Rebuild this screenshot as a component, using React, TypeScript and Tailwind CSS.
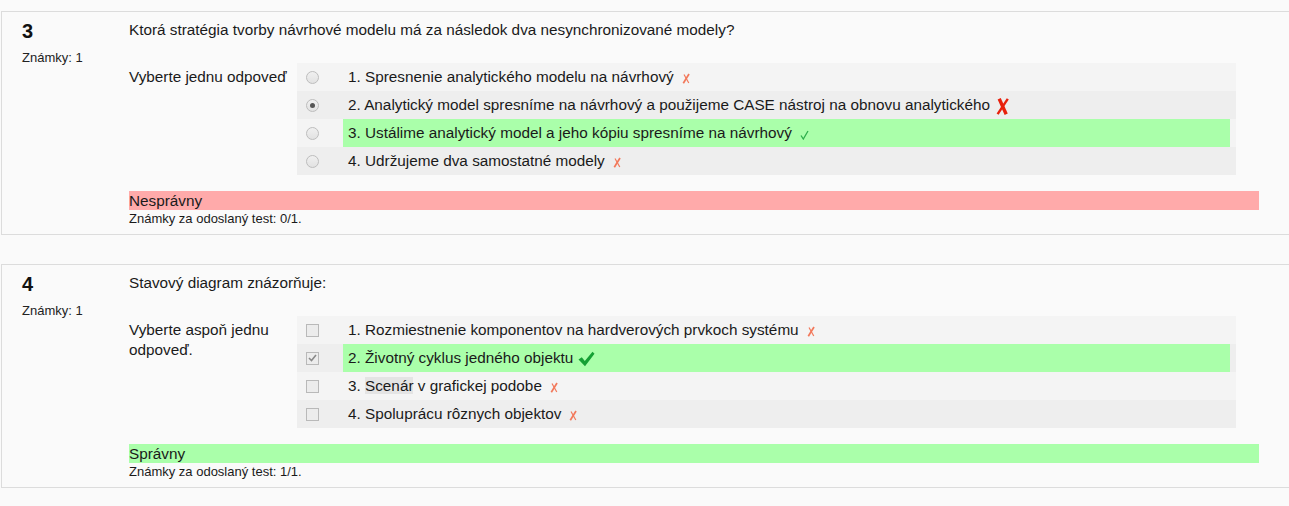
import React from 'react';

type Mark = 'x' | 'X' | 'v' | 'V';

type Answer = {
  text: React.ReactNode;
  mark: Mark;
  checked?: boolean;
  correct?: boolean;
};

type Question = {
  no: number;
  text: string;
  prompt: string;
  multi: boolean;
  answers: Answer[];
  ok: boolean;
  grade: string;
};

const questions: Question[] = [
  {
    no: 3,
    text: 'Ktorá stratégia tvorby návrhové modelu má za následok dva nesynchronizované modely?',
    prompt: 'Vyberte jednu odpoveď',
    multi: false,
    answers: [
      { text: '1. Spresnenie analytického modelu na návrhový', mark: 'x' },
      { text: '2. Analytický model spresníme na návrhový a použijeme CASE nástroj na obnovu analytického', mark: 'X', checked: true },
      { text: '3. Ustálime analytický model a jeho kópiu spresníme na návrhový', mark: 'v', correct: true },
      { text: '4. Udržujeme dva samostatné modely', mark: 'x' },
    ],
    ok: false,
    grade: 'Známky za odoslaný test: 0/1.',
  },
  {
    no: 4,
    text: 'Stavový diagram znázorňuje:',
    prompt: 'Vyberte aspoň jednu odpoveď.',
    multi: true,
    answers: [
      { text: '1. Rozmiestnenie komponentov na hardverových prvkoch systému', mark: 'x' },
      { text: '2. Životný cyklus jedného objektu', mark: 'V', checked: true, correct: true },
      {
        text: (
          <>
            3. <span className="bg-[#e4e4e4]">Scenár</span> v grafickej podobe
          </>
        ),
        mark: 'x',
      },
      { text: '4. Spoluprácu rôznych objektov', mark: 'x' },
    ],
    ok: true,
    grade: 'Známky za odoslaný test: 1/1.',
  },
];

function MarkIcon({ mark }: { mark: Mark }) {
  if (mark === 'x')
    return (
      <svg width="8" height="11" viewBox="0 0 8 11" className="ml-[8px] mt-[3px]">
        <path d="M2 1.5 L6.8 10" stroke="#f2785a" strokeWidth="1.2" fill="none" />
        <path d="M7 1 L1.3 10.2" stroke="#f2785a" strokeWidth="1.7" fill="none" />
      </svg>
    );
  if (mark === 'X')
    return (
      <svg width="13" height="17" viewBox="0 0 13 17" className="ml-[6px] mt-[3px]">
        <path d="M3.2 0.8 L10.2 16.2" stroke="#e8200c" strokeWidth="3.4" fill="none" />
        <path d="M11.8 0.8 L1.6 16.2" stroke="#e8200c" strokeWidth="2.4" fill="none" />
      </svg>
    );
  if (mark === 'v')
    return (
      <svg width="9" height="10" viewBox="0 0 9 10" className="ml-[8px] mt-[3px]">
        <path d="M1 5.5 L3.3 9 L8 1" stroke="#2eae4c" strokeWidth="1.3" fill="none" />
      </svg>
    );
  return (
    <svg width="17" height="16" viewBox="0 0 17 16" className="ml-[5px] mt-[1px]">
      <path d="M0.5 8.5 L3.8 6.3 L6.8 10 L14.5 0.8 L16.5 2.8 L7 15.2 Z" fill="#15a034" />
    </svg>
  );
}

function Control({ multi, checked }: { multi: boolean; checked?: boolean }) {
  if (multi)
    return (
      <span className="w-[13px] h-[13px] border border-[#b9b9b9] bg-[#ececec] flex items-center justify-center shrink-0">
        {checked && (
          <svg width="9" height="8" viewBox="0 0 9 8">
            <path d="M1 4 L3.5 6.5 L8 1" stroke="#8a8a8a" strokeWidth="1.6" fill="none" />
          </svg>
        )}
      </span>
    );
  return (
    <span className="w-[13px] h-[13px] rounded-full border border-[#bdbdbd] bg-gradient-to-b from-[#f0f0f0] to-[#e2e2e2] flex items-center justify-center shrink-0">
      {checked && <span className="w-[5px] h-[5px] rounded-full bg-[#555]" />}
    </span>
  );
}

function QuestionCard({ q }: { q: Question }) {
  return (
    <div className="flex h-[224px] border border-[#dcdcdc] bg-[#fafafa]">
      <div className="w-[127px] shrink-0 pl-[20px] pt-[8px]">
        <div className="text-[20px] leading-[22px] font-bold text-[#111]">{q.no}</div>
        <div className="mt-[8px] text-[13px] leading-[16px] text-[#222]">Známky: 1</div>
      </div>
      <div className="flex-1 pt-[8px]">
        <div className="h-[20px] leading-[20px]">{q.text}</div>
        <div className="flex mt-[23px]">
          <div className="w-[168px] shrink-0 pr-[6px] pt-[4px] leading-[20px]">{q.prompt}</div>
          <div className="w-[939px]">
            {q.answers.map((a, i) => (
              <div
                key={i}
                className={`flex items-center h-[28px] pl-[9px] pr-[6px] ${i % 2 === 0 ? 'bg-[#f4f4f4]' : 'bg-[#eeeeee]'}`}
              >
                <Control multi={q.multi} checked={a.checked} />
                <div className={`ml-[24px] flex-1 h-full flex items-center pl-[5px] ${a.correct ? 'bg-[#aaffaa]' : ''}`}>
                  <span>{a.text}</span>
                  <MarkIcon mark={a.mark} />
                </div>
              </div>
            ))}
          </div>
        </div>
        <div className={`w-[1130px] mt-[16px] h-[19px] leading-[19px] ${q.ok ? 'bg-[#aaffaa]' : 'bg-[#ffaaaa]'}`}>
          {q.ok ? 'Správny' : 'Nesprávny'}
        </div>
        <div className="text-[13px] leading-[15px] mt-px">{q.grade}</div>
      </div>
    </div>
  );
}

export default function App() {
  return (
    <div
      className="min-h-screen overflow-hidden bg-[#fafafa] pt-[11px] pl-px text-[15.3px] text-[#1a1a1a]"
      style={{ fontFamily: '"Liberation Sans", Arial, sans-serif' }}
    >
      <div className="w-[1320px] space-y-[29px]">
        {questions.map((q) => (
          <QuestionCard key={q.no} q={q} />
        ))}
      </div>
    </div>
  );
}
